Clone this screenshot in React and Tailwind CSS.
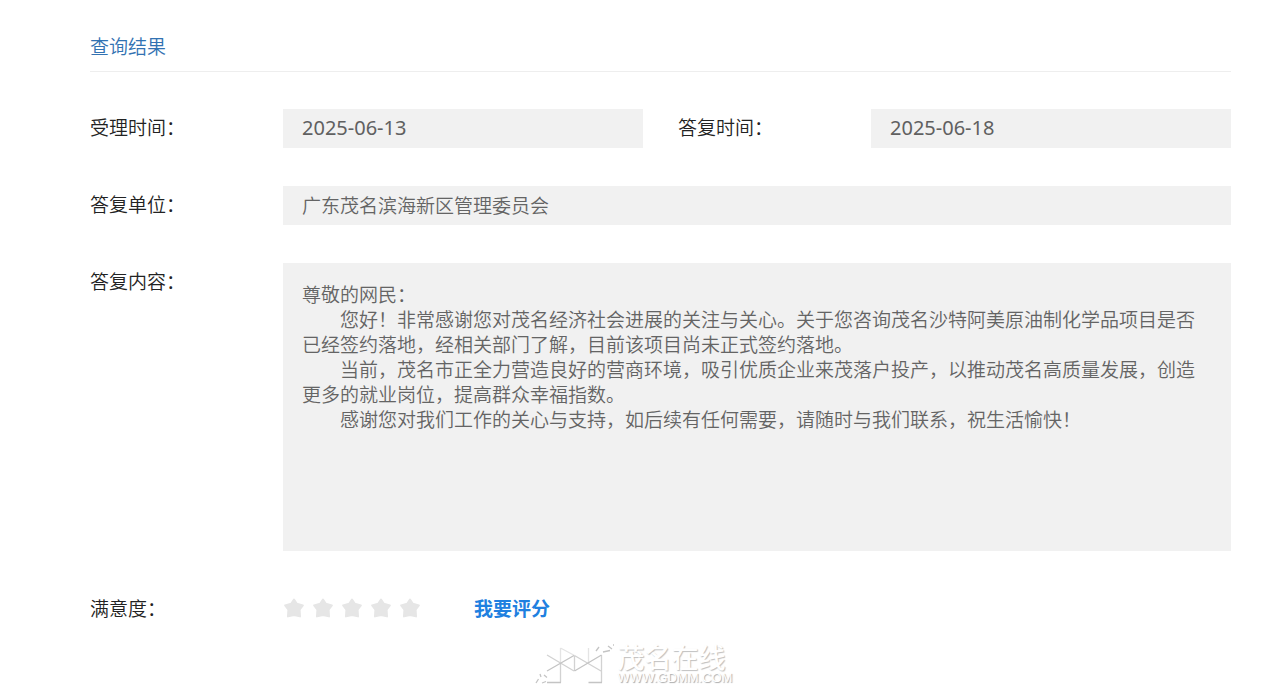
import React from "react";

const reply = [
  "尊敬的网民：",
  "\u3000\u3000您好！非常感谢您对茂名经济社会进展的关注与关心。关于您咨询茂名沙特阿美原油制化学品项目是否已经签约落地，经相关部门了解，目前该项目尚未正式签约落地。",
  "\u3000\u3000当前，茂名市正全力营造良好的营商环境，吸引优质企业来茂落户投产，以推动茂名高质量发展，创造更多的就业岗位，提高群众幸福指数。",
  "\u3000\u3000感谢您对我们工作的关心与支持，如后续有任何需要，请随时与我们联系，祝生活愉快！",
].join("\n");

function Label({ htmlFor, children }) {
  return (
    <label htmlFor={htmlFor} className="w-[193px] shrink-0 leading-[36px] text-[#222222]">
      {children}
    </label>
  );
}

function DateField({ id, label, value }) {
  return (
    <div className="flex">
      <Label htmlFor={id}>{label}</Label>
      <input
        id={id}
        readOnly
        defaultValue={value}
        className="h-[39px] min-w-0 flex-1 bg-[#f1f1f1] px-[19px] pb-[2px] font-['Noto_Sans',sans-serif] text-[20px] font-normal text-[#606060] outline-none"
      />
    </div>
  );
}

function Star({ n }) {
  return (
    <button type="button" aria-label={`${n} 星`} className="block">
      <svg viewBox="0 0 20 20" className="size-5" fill="#e6e6e6" stroke="#e6e6e6" strokeWidth="2" strokeLinejoin="round">
        <path d="M10 1.5 12.8 5.8 18.8 7.4 15.6 11.7 16 18.4 10 17 4 18.4 4.4 11.7 1.2 7.4 7.2 5.8Z" />
      </svg>
    </button>
  );
}

function Watermark() {
  return (
    <div className="flex items-center justify-center">
      <svg viewBox="0 0 84 42" className="h-[42px] w-[84px]" fill="none" strokeWidth="1.3" aria-hidden="true">
        <path stroke="#e4e4e4" d="M26.5 5 40.5 12.5M54.5 5V20M26.5 5V20" />
        <path stroke="#d2d2d2" d="M26.5 20V39.5M40.5 12.5V28M67.5 12V39.5M13 12 40 28M40.5 12.5 67 28" />
        <path stroke="#c4c4c4" d="M13 39.5H27M54.5 39.5H68M13 28 40 12.5M40.5 28 67.5 12" />
        <path stroke="#c4c4c4" d="M2 40 4.5 36M6 31 7 34M8 40 12 38.5M10 32 13 34.5M62 8 65 4M69 9 76 7.5M74 3 78 6M79 2H80" />
      </svg>
      <div className="flex flex-col gap-[2px] text-white">
        <span className="font-['Noto_Sans_CJK_SC',sans-serif] text-[27px] leading-[25px] font-medium [text-shadow:1px_1px_1px_#c0c0c0]">
          茂名在线
        </span>
        <span className="font-['Liberation_Sans',sans-serif] text-[13px] leading-[13px] font-normal [text-shadow:1px_1px_1px_#a8a8a8]">
          WWW.GDMM.COM
        </span>
      </div>
    </div>
  );
}

export default function App() {
  return (
    <main
      lang="zh-CN"
      className="bg-white pt-[31px] pr-[35px] pl-[90px] font-['Noto_Sans_CJK_SC',sans-serif] text-[19px] font-[350]"
    >
      <h1 className="border-b border-[#eeeeee] pb-[10px] leading-[30px] text-[#3272b2]">查询结果</h1>

      <form className="mt-[37px] flex flex-col gap-[38px]">
        <div className="grid grid-cols-2 gap-[35px]">
          <DateField id="accepted" label="受理时间：" value="2025-06-13" />
          <DateField id="replied" label="答复时间：" value="2025-06-18" />
        </div>

        <div className="flex">
          <Label htmlFor="unit">答复单位：</Label>
          <input
            id="unit"
            readOnly
            defaultValue="广东茂名滨海新区管理委员会"
            className="h-[39px] min-w-0 flex-1 bg-[#f1f1f1] px-[19px] pb-[2px] text-[#646464] outline-none"
          />
        </div>

        <div className="flex">
          <Label htmlFor="reply">答复内容：</Label>
          <textarea
            id="reply"
            readOnly
            defaultValue={reply}
            className="h-[288px] min-w-0 flex-1 resize-none bg-[#f1f1f1] px-[19px] py-[18px] leading-[25px] text-[#646464] outline-none"
          />
        </div>

        <div className="flex items-center">
          <span className="w-[194px] shrink-0 leading-[38px] text-[#222222]">满意度：</span>
          <div className="flex gap-[9px]" role="group" aria-label="满意度">
            {[1, 2, 3, 4, 5].map((n) => (
              <Star key={n} n={n} />
            ))}
          </div>
          <button type="button" className="ml-[54px] leading-[38px] font-bold text-[#2080e0]">
            我要评分
          </button>
        </div>
      </form>

      <div className="mt-[16px] mr-[55px]">
        <Watermark />
      </div>
    </main>
  );
}
